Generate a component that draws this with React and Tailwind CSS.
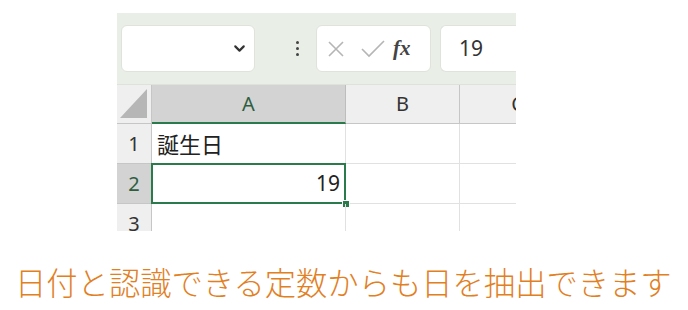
import { ChevronDown } from 'lucide-react';

const cols = [
  { name: 'A', w: 'w-[194px]' },
  { name: 'B', w: 'w-[114px]' },
  { name: 'C', w: 'w-[116px]' },
];

const HeaderRow = () => (
  <div className="flex h-[39px] bg-[#efefef]">
    <div className="w-[35px] shrink-0 border-r border-b border-[#c6c6c6] flex items-end justify-end pr-[4px] pb-[5px]">
      <svg width="27" height="29" viewBox="0 0 27 29">
        <polygon points="27,0 27,29 0,29" fill="#b6b6b6" />
      </svg>
    </div>
    {cols.map((c) =>
      c.name === 'A' ? (
        <div key={c.name} className={`${c.w} shrink-0 bg-[#d3d3d3] border-r border-[#bdbdbd] border-b-[2px] border-b-[#2b7a4b] flex items-center justify-center text-[20px] text-[#2f5e3f]`}>
          {c.name}
        </div>
      ) : (
        <div key={c.name} className={`${c.w} shrink-0 border-r border-b border-[#c6c6c6] flex items-center justify-center text-[20px] text-[#333]`}>
          {c.name}
        </div>
      )
    )}
  </div>
);

const Row = ({ num, selected, children, h = 'h-[40px]' }) => (
  <div className={`flex ${h}`}>
    <div className={`w-[35px] shrink-0 border-r border-b border-[#c6c6c6] flex items-center justify-center text-[20px] ${selected ? 'bg-[#d3d3d3] text-[#2f5e3f]' : 'bg-[#efefef] text-[#333]'}`}>
      {num}
    </div>
    <div className="w-[194px] shrink-0 border-r border-b border-[#e1e1e1] relative">{children}</div>
    <div className="w-[114px] shrink-0 border-r border-b border-[#e1e1e1]" />
    <div className="w-[116px] shrink-0 border-b border-[#e1e1e1]" />
  </div>
);

export default function App() {
  return (
    <div className="w-[688px] h-[310px] bg-white overflow-hidden" style={{ fontFamily: '"Noto Sans", "Noto Sans CJK JP", sans-serif' }}>
      <div className="ml-[117px] mt-[13px] w-[399px] h-[218px] overflow-hidden">
        {/* formula bar */}
        <div className="h-[71px] bg-[#e9eee6] flex items-center pl-[4px]">
          <div className="w-[134px] h-[47px] bg-white rounded-[6px] border border-[#dfe3dc] flex items-center justify-end pr-[6px]">
            <ChevronDown size={17} strokeWidth={3} color="#333" />
          </div>
          <div className="w-[61px] flex flex-col items-start gap-[3px] pl-[41px]">
            <span className="w-[3px] h-[3px] rounded-full bg-[#444]" />
            <span className="w-[3px] h-[3px] rounded-full bg-[#444]" />
            <span className="w-[3px] h-[3px] rounded-full bg-[#444]" />
          </div>
          <div className="w-[115px] h-[47px] bg-white rounded-[6px] border border-[#dfe3dc] flex items-center pl-[10px]">
            <svg width="18" height="18" viewBox="0 0 18 18">
              <path d="M2 2 L16 16 M16 2 L2 16" stroke="#b5b5b5" strokeWidth="1.6" fill="none" />
            </svg>
            <svg width="24" height="18" viewBox="0 0 24 18" className="ml-[16px]">
              <path d="M1 9 L8 16 L23 1" stroke="#b5b5b5" strokeWidth="1.6" fill="none" />
            </svg>
            <span className="ml-[8px] text-[21px] italic font-bold text-[#444]" style={{ fontFamily: '"Liberation Serif", serif' }}>
              fx
            </span>
          </div>
          <div className="ml-[9px] flex-1 h-[47px] bg-white rounded-l-[6px] border border-r-0 border-[#dfe3dc] flex items-center pl-[18px] text-[21px] text-[#333]">
            19
          </div>
        </div>
        <div className="h-[1px] bg-[#dde2da]" />
        <HeaderRow />
        <Row num="1">
          <span className="absolute left-[5px] top-[4px] text-[22px] text-[#222]">誕生日</span>
        </Row>
        <Row num="2" selected>
          <span className="absolute right-[5px] top-[4px] text-[21px] text-[#222]">19</span>
          <div className="absolute -left-[1px] -top-[1px] -right-[1px] -bottom-[1px] border-[2px] border-[#2b7a4b]" />
          <div className="absolute -right-[5px] -bottom-[5px] w-[8px] h-[8px] bg-[#2b7a4b] border border-white" />
        </Row>
        <Row num="3" />
      </div>
      <div className="mt-[35px] pl-[15px] text-[31.3px] leading-none text-[#e2801f] whitespace-nowrap" style={{ fontFamily: '"Noto Sans CJK JP", sans-serif', fontWeight: 300 }}>
        日付と認識できる定数からも日を抽出できます
      </div>
    </div>
  );
}
